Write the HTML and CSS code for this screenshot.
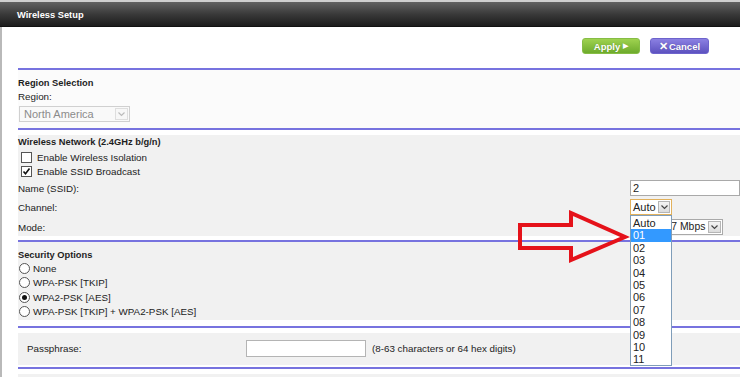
FILE: index.html
```html
<!doctype html>
<html>
<head>
<meta charset="utf-8">
<title>Wireless Setup</title>
<link rel="stylesheet" href="styles.css">
</head>
<body>
<div class="page">
	<div class="titlebar">Wireless Setup</div>
	<div class="panel">
		<div class="actions">
			<a href="javascript:;" class="btn apply">Apply <span class="tri">&#9654;</span></a>
			<a href="javascript:;" class="btn cancel"><span class="x">&#10005;</span>Cancel</a>
		</div>
		<div class="rule"></div>

		<div class="section region">
			<h3>Region Selection</h3>
			<div class="lbl">Region:</div>
			<div class="sel sel-region disabled">
				<span class="val">North America</span>
				<span class="drop"><svg width="7" height="5" viewBox="0 0 7 5"><polyline points="0.5,0.5 3.5,3.5 6.5,0.5" fill="none" stroke="#bbb" stroke-width="1.2"/></svg></span>
			</div>
		</div>
		<div class="rule"></div>

		<div class="section boxed wlan">
			<h3>Wireless Network (2.4GHz b/g/n)</h3>
			<label class="check"><span class="cb"></span>Enable Wireless Isolation</label>
			<label class="check"><span class="cb on"><svg width="9" height="9" viewBox="0 0 9 9"><polyline points="1.5,4.5 3.5,6.8 7.5,1.5" fill="none" stroke="#111" stroke-width="1.6"/></svg></span>Enable SSID Broadcast</label>
			<div class="field first">
				<span class="name">Name (SSID):</span>
				<span class="txt ssid">2</span>
			</div>
			<div class="field">
				<span class="name">Channel:</span>
				<div class="sel sel-channel focus">
					<span class="val">Auto</span>
					<span class="drop"><svg width="7" height="5" viewBox="0 0 7 5"><polyline points="0.5,0.5 3.5,3.5 6.5,0.5" fill="none" stroke="#444" stroke-width="1.2"/></svg></span>
				</div>
			</div>
			<div class="field mode">
				<span class="name">Mode:</span>
				<div class="sel sel-mode">
					<span class="val">Up to 217 Mbps</span>
					<span class="drop"><svg width="7" height="5" viewBox="0 0 7 5"><polyline points="0.5,0.5 3.5,3.5 6.5,0.5" fill="none" stroke="#444" stroke-width="1.2"/></svg></span>
				</div>
			</div>
		</div>
		<div class="rule"></div>

		<div class="section boxed security">
			<h3>Security Options</h3>
			<label class="radio"><span class="rd"></span>None</label>
			<label class="radio"><span class="rd"></span>WPA-PSK [TKIP]</label>
			<label class="radio"><span class="rd on"></span>WPA2-PSK [AES]</label>
			<label class="radio"><span class="rd"></span>WPA-PSK [TKIP] + WPA2-PSK [AES]</label>
		</div>
		<div class="rule"></div>

		<div class="section boxed pass">
			<div class="pass-row">
				<span class="name">Passphrase:</span>
				<span class="txt phrase"></span>
				<span class="hint">(8-63 characters or 64 hex digits)</span>
			</div>
		</div>
		<div class="rule"></div>
		<div class="section boxed tail"></div>
	</div>

	<!-- open channel list -->
	<ul class="droplist">
		<li>Auto</li>
		<li class="hl">01</li>
		<li>02</li>
		<li>03</li>
		<li>04</li>
		<li>05</li>
		<li>06</li>
		<li>07</li>
		<li>08</li>
		<li>09</li>
		<li>10</li>
		<li>11</li>
	</ul>

	<svg class="pointer" width="120" height="60" viewBox="0 0 120 60">
		<polygon points="3,15 54,15 54,3 108,27 54,50 54,38 3,38" fill="none" stroke="#e5121a" stroke-width="4" stroke-linejoin="miter"/>
	</svg>
</div>
</body>
</html>
```

FILE: styles.css
```css
* { margin:0; padding:0; box-sizing:border-box; }
body { width:740px; height:377px; overflow:hidden; background:#fff; font-family:"Liberation Sans", Arial, sans-serif; color:#222; }
.page { position:relative; width:740px; height:377px; }

.titlebar { height:27px; border-top:2px solid #cfcfcf; padding:1px 0 0 17px; line-height:24px; font-size:9.3px; font-weight:bold; color:#fff; background:linear-gradient(#626262 0%, #3a3a3a 50%, #1c1c1c 100%); border-bottom:1px solid #111; }

.panel { border-left:2px solid #b9b9b9; padding-left:16px; height:350px; }

.actions { display:flex; justify-content:flex-end; gap:10px; padding:11px 31px 14px 0; }
.btn { display:flex; align-items:center; justify-content:center; height:16px; border-radius:3px; font-size:9.5px; font-weight:bold; color:#fff; text-decoration:none; text-shadow:0 0 1px rgba(0,0,0,.25); }
.apply { width:58px; background:linear-gradient(#9fd24f, #6eab2c); border:1px solid #86bd45; }
.apply .tri { font-size:7px; margin-left:3px; }
.cancel { width:59px; background:linear-gradient(#8b80e2, #5d52bf); border:1px solid #6d63cc; }
.cancel .x { font-size:11px; margin-right:1px; }

.rule { height:2px; background:#7773df; }

.section { font-size:9.8px; }
.section h3 { font-size:9.3px; line-height:12px; font-weight:bold; color:#1e1e1e; }
.region { height:58px; padding-top:7px; background:#fbfbfb; }
.region .lbl { margin-top:2px; line-height:12px; }

.boxed { background:#f1f1f1; border-top:5px solid #fff; border-bottom:4px solid #fff; }

.sel { display:flex; align-items:center; height:16px; border:1px solid #a9a9a9; background:#fff; font-size:11px; }
.sel .val { flex:1; padding-left:2px; line-height:14px; white-space:nowrap; overflow:hidden; }
.sel .drop { display:flex; align-items:center; justify-content:center; flex:0 0 13px; height:12px; margin-right:1px; border:1px solid #b5b5b5; background:linear-gradient(#f4f4f4, #dcdcdc); }
.sel-region { width:111px; margin:3px 0 0 1px; border-color:#d0d0d0; background:#f9f9f9; }
.sel-region .val { color:#8b8b8b; padding-left:4px; }
.sel-region .drop { background:#f7f7f7; border-color:#dedede; }
.sel-channel { width:42px; border-color:#e2b15c; }
.sel-channel .drop { flex-basis:12px; }
.sel-mode { width:93px; }
.sel-mode .val { font-size:10.4px; padding-left:1px; }

.wlan { height:110px; padding-top:1px; }
.check { display:flex; align-items:center; height:14px; padding-left:3px; }
.check:first-of-type { margin-top:2px; }
.cb { display:flex; align-items:center; justify-content:center; width:11px; height:11px; margin-right:5px; border:1px solid #555; background:#fff; }

.field { display:flex; align-items:center; height:16px; margin-top:3px; }
.field.first { margin-top:2px; }
.field.mode { margin-top:4px; }
.field .name { flex:0 0 612px; }
.txt { display:block; height:16px; border:1px solid #a9a9a9; background:#fff; font-size:11px; line-height:14px; padding-left:2px; }
.ssid { width:140px; }

.security { height:84px; padding-top:1px; border-top:0; border-bottom-width:6px; }
.security h3 { margin-top:6px; }
.radio { display:flex; align-items:center; height:14.5px; padding-left:1px; }
.rd { position:relative; width:11px; height:11px; margin-right:3px; border:1px solid #555; border-radius:50%; background:#fff; }
.rd.on::after { content:""; position:absolute; left:2px; top:2px; width:5px; height:5px; border-radius:50%; background:#111; }

.pass { height:39px; border-top-width:5px; border-bottom-width:2px; padding-top:7px; }
.pass-row { display:flex; align-items:center; height:17px; padding-left:9px; }
.pass-row .name { flex:0 0 219px; }
.phrase { width:120px; height:17px; border-color:#b4b4b4; }
.hint { margin-left:6px; }

.tail { height:12px; border-bottom:0; }

.droplist { position:absolute; left:630px; top:215px; width:42px; height:151px; list-style:none; border:1px solid #7f9db9; background:#fff; font-size:11px; padding-top:1px; }
.droplist li { height:12.4px; line-height:12.4px; padding-left:2px; }
.droplist li.hl { background:#3399ff; color:#fff; }

.pointer { position:absolute; left:517px; top:210px; }
```
